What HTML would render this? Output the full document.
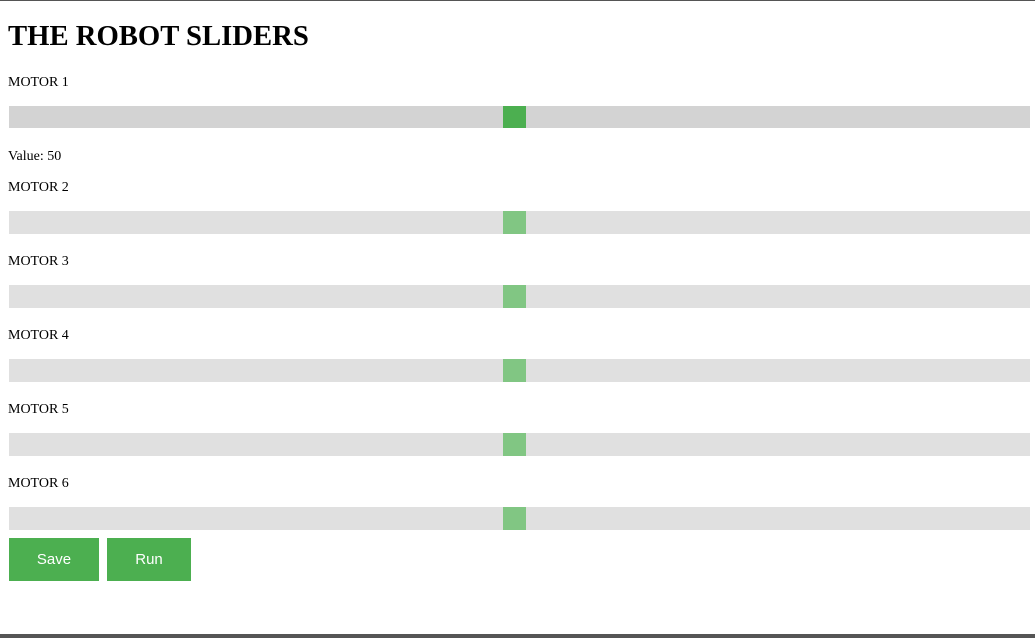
<!DOCTYPE html>
<html><head><style>
body{margin:0;width:1035px;height:638px;position:relative;overflow:hidden;background:#fff;font-family:"Liberation Serif",serif;}
.t{position:absolute;left:8px;font-size:14px;color:#000;line-height:16px;}
.tr{position:absolute;left:9px;width:1021px;height:23px;background:#d3d3d3;}
.tr.o{opacity:.7}
.th{position:absolute;left:494px;top:0;width:23px;height:23px;background:#4CAF50;}
.b{position:absolute;top:538px;height:43px;background:#4CAF50;color:#fff;font:15px "Liberation Sans",sans-serif;text-align:center;line-height:43px;}
</style></head><body>
<div style="position:absolute;top:0;left:0;width:1035px;height:1px;background:#555"></div>
<div style="position:absolute;top:634px;left:0;width:1035px;height:4px;background:#555"></div>
<div style="position:absolute;left:8px;top:18px;font-size:28.7px;font-weight:bold;line-height:36px">THE ROBOT SLIDERS</div>
<div class="t" style="top:75px">MOTOR 1</div>
<div class="tr" style="top:106px;height:22px"><div class="th" style="height:22px"></div></div>
<div class="t" style="top:149px">Value: 50</div>
<div class="t" style="top:180px">MOTOR 2</div>
<div class="tr o" style="top:211px"><div class="th"></div></div>
<div class="t" style="top:254px">MOTOR 3</div>
<div class="tr o" style="top:285px"><div class="th"></div></div>
<div class="t" style="top:328px">MOTOR 4</div>
<div class="tr o" style="top:359px"><div class="th"></div></div>
<div class="t" style="top:402px">MOTOR 5</div>
<div class="tr o" style="top:433px"><div class="th"></div></div>
<div class="t" style="top:476px">MOTOR 6</div>
<div class="tr o" style="top:507px"><div class="th"></div></div>
<div class="b" style="left:9px;width:90px">Save</div>
<div class="b" style="left:107px;width:84px">Run</div>
</body></html>
